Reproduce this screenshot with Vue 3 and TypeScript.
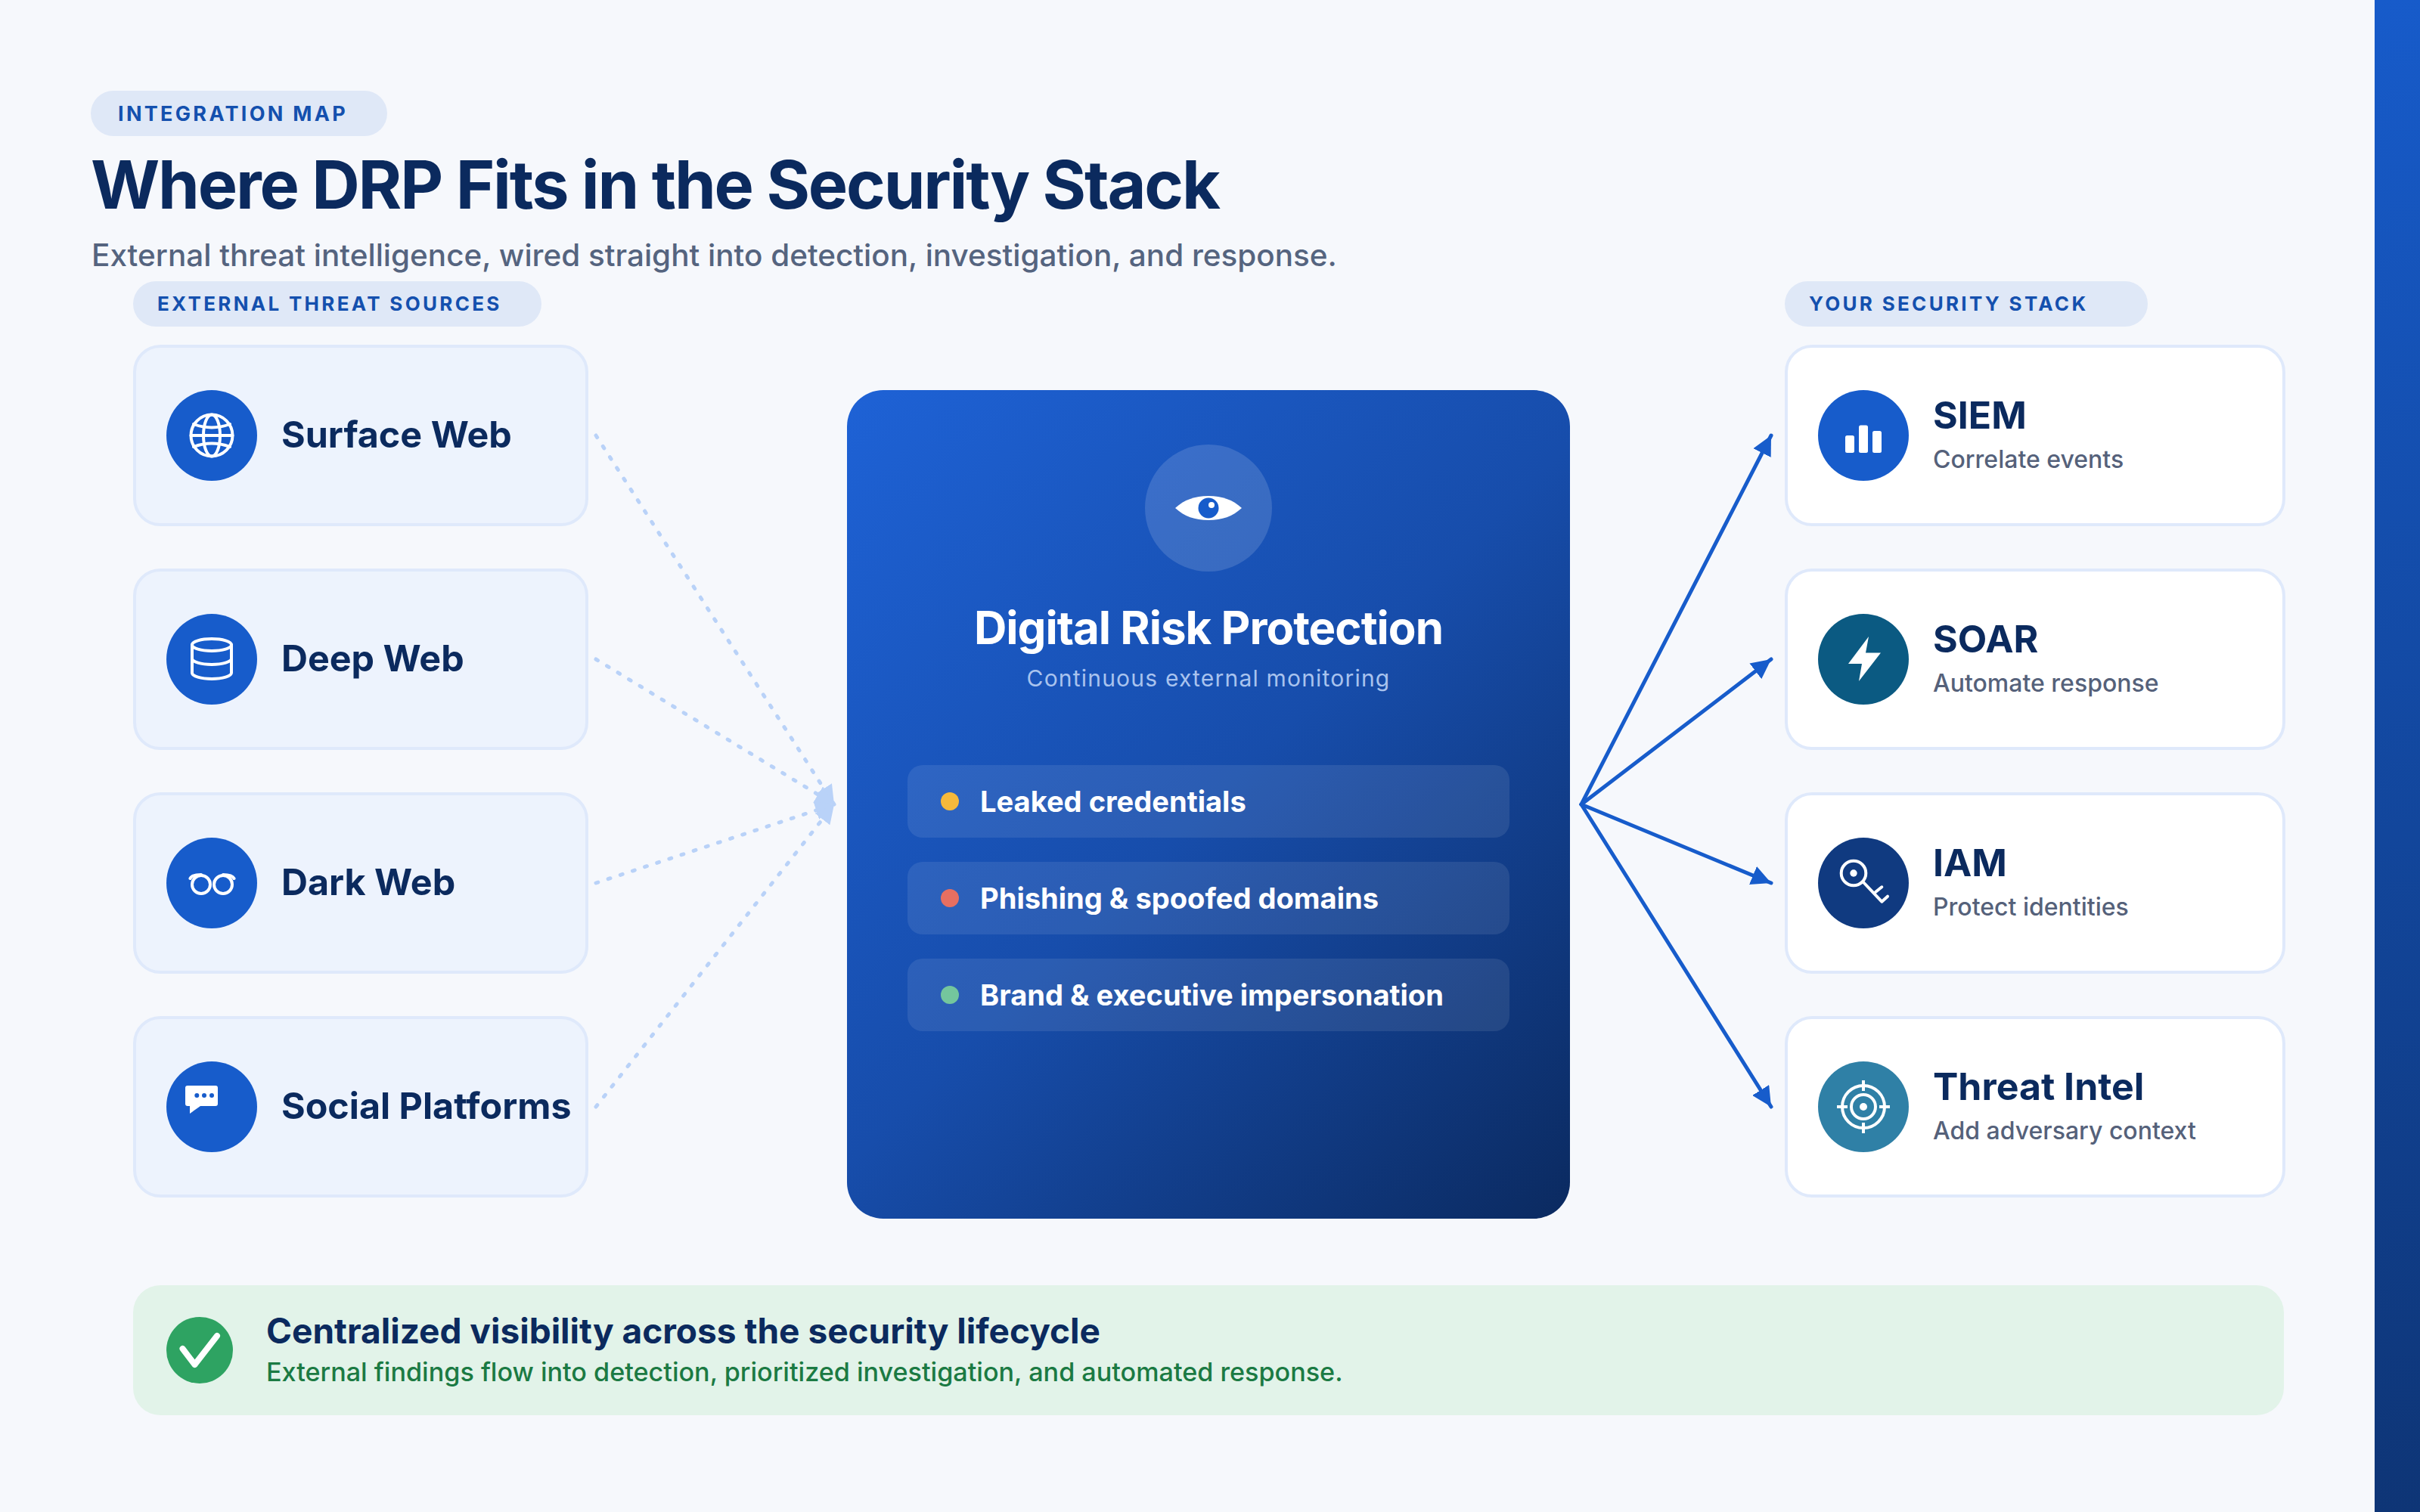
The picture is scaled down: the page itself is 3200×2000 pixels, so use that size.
<script setup lang="ts">
interface Card { key: string; title: string; sub?: string; color: string }

const sources: Card[] = [
  { key: 'globe', title: 'Surface Web', color: '#175CCB' },
  { key: 'db', title: 'Deep Web', color: '#175CCB' },
  { key: 'glasses', title: 'Dark Web', color: '#175CCB' },
  { key: 'chat', title: 'Social Platforms', color: '#175CCB' },
]
const targets: Card[] = [
  { key: 'bars', title: 'SIEM', sub: 'Correlate events', color: '#175CCB' },
  { key: 'bolt', title: 'SOAR', sub: 'Automate response', color: '#0B5A82' },
  { key: 'key', title: 'IAM', sub: 'Protect identities', color: '#103A80' },
  { key: 'target', title: 'Threat Intel', sub: 'Add adversary context', color: '#2F80A6' },
]
const capabilities = [
  { label: 'Leaked credentials', color: '#F6B93B' },
  { label: 'Phishing & spoofed domains', color: '#E76F61' },
  { label: 'Brand & executive impersonation', color: '#74C69D' },
]
const rowYs = [576, 872, 1168, 1464]
</script>

<template>
  <div class="page">
    <main class="main">
      <header class="head">
        <span class="pill">INTEGRATION MAP</span>
        <h1>Where DRP Fits in the Security Stack</h1>
        <p class="lede">External threat intelligence, wired straight into detection, investigation, and response.</p>
      </header>

      <section class="diagram">
        <div class="col">
          <span class="label label-left">EXTERNAL THREAT SOURCES</span>
          <div v-for="c in sources" :key="c.key" class="card card-source">
            <span class="badge" :style="{ background: c.color }">
              <svg viewBox="0 0 120 120" class="glyph" fill="none" stroke="#fff" stroke-width="4" stroke-linecap="round">
                <g v-if="c.key === 'globe'">
                  <circle cx="60" cy="60" r="27.5" />
                  <ellipse cx="60" cy="60" rx="11" ry="27.5" />
                  <path d="M32.5 60H87.5M36 45Q60 54 84 45M36 75Q60 66 84 75" />
                </g>
                <g v-else-if="c.key === 'db'">
                  <ellipse cx="60" cy="41" rx="26" ry="8" />
                  <path d="M34 41V78A26 8 0 0 0 86 78V41M34 59A26 8 0 0 0 86 59" />
                </g>
                <g v-else-if="c.key === 'glasses'">
                  <circle cx="46" cy="62" r="12" />
                  <circle cx="75" cy="62" r="12" />
                  <path d="M31.5 54Q34 49 46 49M89.5 54Q87 49 75 49" />
                </g>
                <g v-else>
                  <path d="M28 32H65a3 3 0 0 1 3 3V56a3 3 0 0 1-3 3H45L31 69V59H28a3 3 0 0 1-3-3V35a3 3 0 0 1 3-3Z" fill="#fff" stroke="none" />
                  <circle cx="40.3" cy="45" r="3" fill="#175CCB" stroke="none" />
                  <circle cx="50" cy="45" r="3" fill="#175CCB" stroke="none" />
                  <circle cx="60" cy="45" r="3" fill="#175CCB" stroke="none" />
                </g>
              </svg>
            </span>
            <span class="name name-solo">{{ c.title }}</span>
          </div>
        </div>

        <svg class="wires" viewBox="778 372 342 1240" fill="none">
          <defs>
            <marker id="tip-light" viewBox="0 0 8 8" refX="8" refY="4" markerWidth="25" markerHeight="25" markerUnits="userSpaceOnUse" orient="auto">
              <path d="M0 0L8 4L0 8Z" fill="#B9D2F8" />
            </marker>
          </defs>
          <line
            v-for="y in rowYs"
            :key="y"
            x1="788"
            :y1="y"
            x2="1103"
            y2="1064"
            stroke="#B9D2F8"
            stroke-width="5"
            stroke-linecap="round"
            stroke-dasharray="3 14"
            marker-end="url(#tip-light)"
          />
        </svg>

        <div class="core">
          <span class="eye">
            <svg viewBox="0 0 88 32" class="eye-svg">
              <path d="M0 16C12 5 26 0 44 0S76 5 88 16C76 27 62 32 44 32S12 27 0 16Z" fill="#fff" />
              <circle cx="44" cy="16" r="13.5" fill="#175CCB" />
              <circle cx="48" cy="12" r="4" fill="#fff" />
            </svg>
          </span>
          <h2>Digital Risk Protection</h2>
          <p class="core-sub">Continuous external monitoring</p>
          <ul class="caps">
            <li v-for="cap in capabilities" :key="cap.label">
              <i :style="{ background: cap.color }"></i>
              <span>{{ cap.label }}</span>
            </li>
          </ul>
        </div>

        <svg class="wires" viewBox="2076 372 284 1240" fill="none">
          <defs>
            <marker id="tip-solid" viewBox="0 0 8 8" refX="8" refY="4" markerWidth="26" markerHeight="26" markerUnits="userSpaceOnUse" orient="auto">
              <path d="M0 0L8 4L0 8Z" fill="#175CCB" />
            </marker>
          </defs>
          <line
            v-for="y in rowYs"
            :key="y"
            x1="2091"
            y1="1064"
            x2="2342"
            :y2="y"
            stroke="#175CCB"
            stroke-width="5"
            stroke-linecap="round"
            marker-end="url(#tip-solid)"
          />
        </svg>

        <div class="col">
          <span class="label label-right">YOUR SECURITY STACK</span>
          <div v-for="c in targets" :key="c.key" class="card card-target">
            <span class="badge" :style="{ background: c.color }">
              <svg viewBox="0 0 120 120" class="glyph" fill="none" stroke="#fff" stroke-width="4" stroke-linecap="round">
                <g v-if="c.key === 'bars'" fill="#fff" stroke="none">
                  <rect x="36" y="60" width="12" height="23" rx="2.5" />
                  <rect x="54" y="46.5" width="12" height="36.5" rx="2.5" />
                  <rect x="72" y="54" width="12" height="29" rx="2.5" />
                </g>
                <path v-else-if="c.key === 'bolt'" d="M67 30L63 51.5H83L54 89L58 66H40Z" fill="#fff" stroke="none" />
                <g v-else-if="c.key === 'key'">
                  <circle cx="47" cy="47" r="16.3" />
                  <circle cx="47" cy="47" r="4.7" fill="#fff" stroke="none" />
                  <path d="M60 59L84.3 84.7M76 72L84.3 65.3M84.3 84.7L92 77.7" />
                </g>
                <g v-else stroke-linecap="butt">
                  <circle cx="60" cy="60" r="28" />
                  <circle cx="60" cy="60" r="16" />
                  <circle cx="60" cy="60" r="5" fill="#fff" stroke="none" />
                  <path d="M60 25V39M60 81V95M25 60H39M81 60H95" />
                </g>
              </svg>
            </span>
            <span class="copy">
              <span class="name name-target">{{ c.title }}</span>
              <span class="desc">{{ c.sub }}</span>
            </span>
          </div>
        </div>
      </section>

      <footer class="banner">
        <span class="check">
          <svg viewBox="0 0 88 88" fill="none">
            <path d="M21.5 42L37.5 63L67 25" stroke="#fff" stroke-width="8" stroke-linecap="round" stroke-linejoin="round" />
          </svg>
        </span>
        <span class="banner-copy">
          <strong>Centralized visibility across the security lifecycle</strong>
          <span>External findings flow into detection, prioritized investigation, and automated response.</span>
        </span>
      </footer>
    </main>
    <aside class="rail"></aside>
  </div>
</template>

<style>
html, body { margin: 0; background: #F6F8FC; }
</style>

<style scoped>
.page {
  width: 3200px;
  height: 2000px;
  display: flex;
  overflow: hidden;
  background: #F6F8FC;
  font-family: Inter, "Noto Sans", sans-serif;
  color: #0B2A5E;
}
.main {
  width: 3140px;
  box-sizing: border-box;
  padding-top: 120px;
}
.rail {
  width: 60px;
  background: linear-gradient(180deg, #175BCA, #0E3576);
}
.head {
  margin-left: 120px;
  display: flex;
  flex-direction: column;
  align-items: flex-start;
}
.pill {
  width: 392px;
  height: 60px;
  box-sizing: border-box;
  padding-left: 36px;
  border-radius: 30px;
  background: #DFE8F7;
  color: #1450AE;
  font-size: 27px;
  font-weight: 700;
  letter-spacing: 3.3px;
  line-height: 61px;
}
h1 {
  margin: 11px 0 0;
  font-size: 88px;
  line-height: 106px;
  font-weight: 700;
  letter-spacing: -2.2px;
}
.lede {
  margin: 16px 0 0 1px;
  font-size: 40.45px;
  line-height: 50px;
  font-weight: 500;
  color: #55647F;
}
.diagram {
  margin: 9px 0 0 176px;
  width: 2846px;
  display: grid;
  grid-template-columns: 602px 342px 956px 284px 662px;
  align-items: start;
}
.col {
  display: flex;
  flex-direction: column;
  align-items: flex-start;
  gap: 56px;
}
.label {
  height: 60px;
  box-sizing: border-box;
  padding-left: 32px;
  margin-bottom: -32px;
  border-radius: 30px;
  background: #DFE8F7;
  color: #1450AE;
  font-size: 26px;
  font-weight: 700;
  letter-spacing: 3.3px;
  line-height: 60px;
}
.label-left { width: 540px; }
.label-right { width: 480px; }
.card {
  width: 100%;
  height: 240px;
  box-sizing: border-box;
  padding-left: 40px;
  display: flex;
  align-items: center;
  gap: 32px;
  border: 4px solid #DFE9FB;
  border-radius: 36px;
}
.card-source { background: #EDF3FD; }
.card-target { background: #fff; }
.badge {
  width: 120px;
  height: 120px;
  flex: none;
  border-radius: 50%;
}
.glyph { display: block; width: 120px; height: 120px; }
.name {
  line-height: 58px;
  font-weight: 700;
  color: #0B2A5E;
  white-space: nowrap;
}
.name-solo {
  font-size: 48.4px;
  margin-bottom: 2px;
}
.name-target { font-size: 50px; }
.copy {
  display: flex;
  flex-direction: column;
  padding-bottom: 4px;
}
.desc {
  margin-top: 10px;
  font-size: 32px;
  line-height: 40px;
  font-weight: 500;
  color: #55617A;
}
.wires {
  width: 100%;
  height: 100%;
  align-self: stretch;
  overflow: visible;
}
.core {
  margin-top: 144px;
  height: 1096px;
  box-sizing: border-box;
  padding: 72px 80px 0;
  border-radius: 48px;
  background: linear-gradient(135deg, #1E62D6 0%, #174DAB 50%, #0B2A60 100%);
  display: flex;
  flex-direction: column;
  align-items: center;
  color: #fff;
}
.eye {
  width: 168px;
  height: 168px;
  border-radius: 50%;
  background: rgba(255, 255, 255, 0.14);
  display: flex;
  align-items: center;
  justify-content: center;
}
.eye-svg { width: 88px; height: 32px; display: block; }
h2 {
  margin: 38px 0 0;
  font-size: 60px;
  line-height: 72px;
  font-weight: 700;
  letter-spacing: -1px;
  white-space: nowrap;
}
.core-sub {
  margin: 12px 0 0;
  font-size: 30px;
  line-height: 38px;
  letter-spacing: 1.2px;
  color: #A9C3EE;
}
.caps {
  list-style: none;
  margin: 96px 0 0;
  padding: 0;
  width: 100%;
  display: flex;
  flex-direction: column;
  gap: 32px;
}
.caps li {
  height: 96px;
  box-sizing: border-box;
  padding-left: 44px;
  display: flex;
  align-items: center;
  gap: 28px;
  border-radius: 20px;
  background: rgba(255, 255, 255, 0.09);
  font-size: 38.1px;
  font-weight: 700;
}
.caps i {
  width: 24px;
  height: 24px;
  border-radius: 50%;
  flex: none;
}
.banner {
  margin: 88px 0 0 176px;
  width: 2844px;
  height: 172px;
  box-sizing: border-box;
  padding-left: 44px;
  display: flex;
  align-items: center;
  gap: 44px;
  border-radius: 36px;
  background: #E2F3E9;
}
.check {
  width: 88px;
  height: 88px;
  border-radius: 50%;
  background: #2EA362;
  flex: none;
}
.check svg { display: block; width: 88px; height: 88px; }
.banner-copy {
  display: flex;
  flex-direction: column;
  padding-bottom: 4px;
}
.banner-copy strong {
  font-size: 46px;
  line-height: 58px;
  font-weight: 700;
}
.banner-copy span {
  margin-top: 4px;
  font-size: 34.15px;
  line-height: 44px;
  font-weight: 500;
  color: #1B7A43;
}
</style>
